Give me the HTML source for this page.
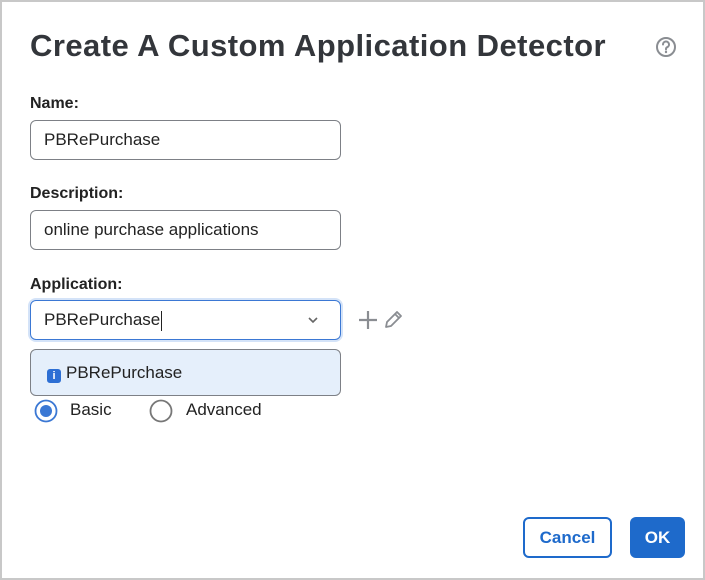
<!DOCTYPE html>
<html><head><style>
html,body{margin:0;padding:0;}
body{width:705px;height:580px;position:relative;font-family:"Liberation Sans",sans-serif;background:#fff;overflow:hidden;}
.frame{position:absolute;left:0;top:0;width:701px;height:576px;border:2px solid #c8c8c8;}
.a{position:absolute;}
h1{position:absolute;left:30px;top:28px;margin:0;font-size:31px;font-weight:bold;color:#33363b;letter-spacing:0.45px;white-space:nowrap;}
.lbl{position:absolute;left:30px;font-size:16px;font-weight:bold;color:#222;}
.inp{position:absolute;left:30px;width:309px;height:38px;border:1.5px solid #7d8086;border-radius:6px;box-sizing:content-box;font-size:17px;color:#222;line-height:38px;text-indent:13px;}
.btn{position:absolute;top:517px;height:41px;border-radius:6px;font-size:17px;font-weight:bold;display:flex;align-items:center;justify-content:center;box-sizing:border-box;}
</style></head><body>
<div class="frame"></div>
<h1>Create A Custom Application Detector</h1>
<svg class="a" style="left:655px;top:36px" width="22" height="22" viewBox="0 0 22 22"><circle cx="11" cy="11" r="9" fill="none" stroke="#8a8d92" stroke-width="2"/><path d="M8 8.5a3 3 0 1 1 4.2 2.7c-.8.4-1.2.9-1.2 1.8v.5" fill="none" stroke="#8a8d92" stroke-width="2" stroke-linecap="round"/><circle cx="11" cy="16" r="1.2" fill="#8a8d92"/></svg>
<div class="lbl" style="top:95px">Name:</div>
<div class="inp" style="top:120px">PBRePurchase</div>
<div class="lbl" style="top:185px">Description:</div>
<div class="inp" style="top:210px">online purchase applications</div>
<div class="lbl" style="top:276px">Application:</div>
<div class="inp" style="top:300px;border-color:#3b78d4;box-shadow:0 0 0 2px #d4e3f8">PBRePurchase<span style="display:inline-block;width:1px;height:20px;background:#222;vertical-align:middle;margin-left:1px"></span></div>
<svg class="a" style="left:306px;top:315px" width="14" height="10" viewBox="0 0 14 10"><path d="M3 3l4 4 4-4" fill="none" stroke="#666" stroke-width="1.6"/></svg>
<svg class="a" style="left:357px;top:309px" width="22" height="22" viewBox="0 0 22 22"><path d="M11 2v18M2 11h18" stroke="#8a8d92" stroke-width="2.2"/></svg>
<svg class="a" style="left:382px;top:309px" width="22" height="22" viewBox="0 0 22 22"><path d="M4 18l1-5L15 3l4 4L9 17z M13 5l4 4" fill="none" stroke="#8a8d92" stroke-width="1.8" stroke-linejoin="round"/></svg>
<div class="a" style="left:30px;top:349px;width:309px;height:45px;background:#e5effb;border:1.5px solid #7d8086;border-radius:6px;font-size:17px;color:#222;line-height:45px;">
<span style="display:inline-block;width:14px;height:14px;background:#2d6fd4;border-radius:3px;margin-left:16px;margin-right:5px;vertical-align:-1px;color:#fff;font-size:11px;font-weight:bold;line-height:14px;text-align:center">i</span>PBRePurchase</div>
<svg class="a" style="left:34px;top:399px" width="24" height="24" viewBox="0 0 24 24"><circle cx="12" cy="12" r="10.5" fill="#fff" stroke="#3b78d4" stroke-width="1.8"/><circle cx="12" cy="12" r="6" fill="#3b78d4"/></svg>
<div class="a" style="left:70px;top:400px;font-size:17px;color:#222">Basic</div>
<svg class="a" style="left:149px;top:399px" width="24" height="24" viewBox="0 0 24 24"><circle cx="12" cy="12" r="10.5" fill="#fff" stroke="#777" stroke-width="1.8"/></svg>
<div class="a" style="left:186px;top:400px;font-size:17px;color:#222">Advanced</div>
<div class="btn" style="left:523px;width:89px;border:2px solid #1e6acb;color:#1e6acb;background:#fff">Cancel</div>
<div class="btn" style="left:630px;width:55px;background:#1e6acb;color:#fff">OK</div>
</body></html>
